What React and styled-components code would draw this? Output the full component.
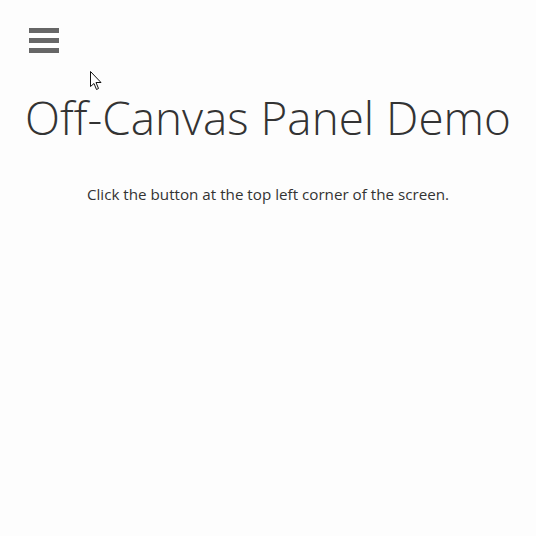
import styled, { createGlobalStyle } from 'styled-components';

const GlobalStyle = createGlobalStyle`
  html, body {
    margin: 0;
    padding: 0;
    background: #fdfdfd;
  }
  body {
    font-family: "Open Sans", "Noto Sans", sans-serif;
    color: #333;
  }
`;

const Page = styled.div`
  position: relative;
  width: 536px;
  height: 536px;
  overflow: hidden;
`;

const MenuButton = styled.button`
  display: flex;
  flex-direction: column;
  gap: 5px;
  margin: 28px 0 0 29px;
  padding: 0;
  border: 0;
  background: none;
  cursor: pointer;
`;

const Bar = styled.span`
  display: block;
  width: 30px;
  height: 5px;
  background: #666;
`;

const Main = styled.main`
  display: flex;
  flex-direction: column;
  align-items: center;
  padding-top: 42px;
`;

const Title = styled.h1`
  margin: 0;
  font-size: 45.8px;
  font-weight: 300;
  line-height: 1;
  color: #333;
  white-space: nowrap;
`;

const Lead = styled.p`
  margin: 43px 0 0;
  font-size: 15.2px;
  color: #333;
`;

const Pointer = styled.svg`
  position: absolute;
  left: 90px;
  top: 71px;
`;

export default function App() {
  return (
    <>
      <GlobalStyle />
      <Page>
        <MenuButton aria-label="Open panel">
          <Bar />
          <Bar />
          <Bar />
        </MenuButton>
        <Main>
          <Title>Off-Canvas Panel Demo</Title>
          <Lead>Click the button at the top left corner of the screen.</Lead>
        </Main>
        <Pointer width="13" height="20" viewBox="0 0 13 20">
          <path
            d="M0.5 0.5 L0.5 15.5 L4 12.5 L6.5 18.5 L8.5 17.5 L6 11.5 L11 11.5 Z"
            fill="#fff"
            stroke="#111"
            strokeWidth="1"
            strokeLinejoin="miter"
          />
        </Pointer>
      </Page>
    </>
  );
}
